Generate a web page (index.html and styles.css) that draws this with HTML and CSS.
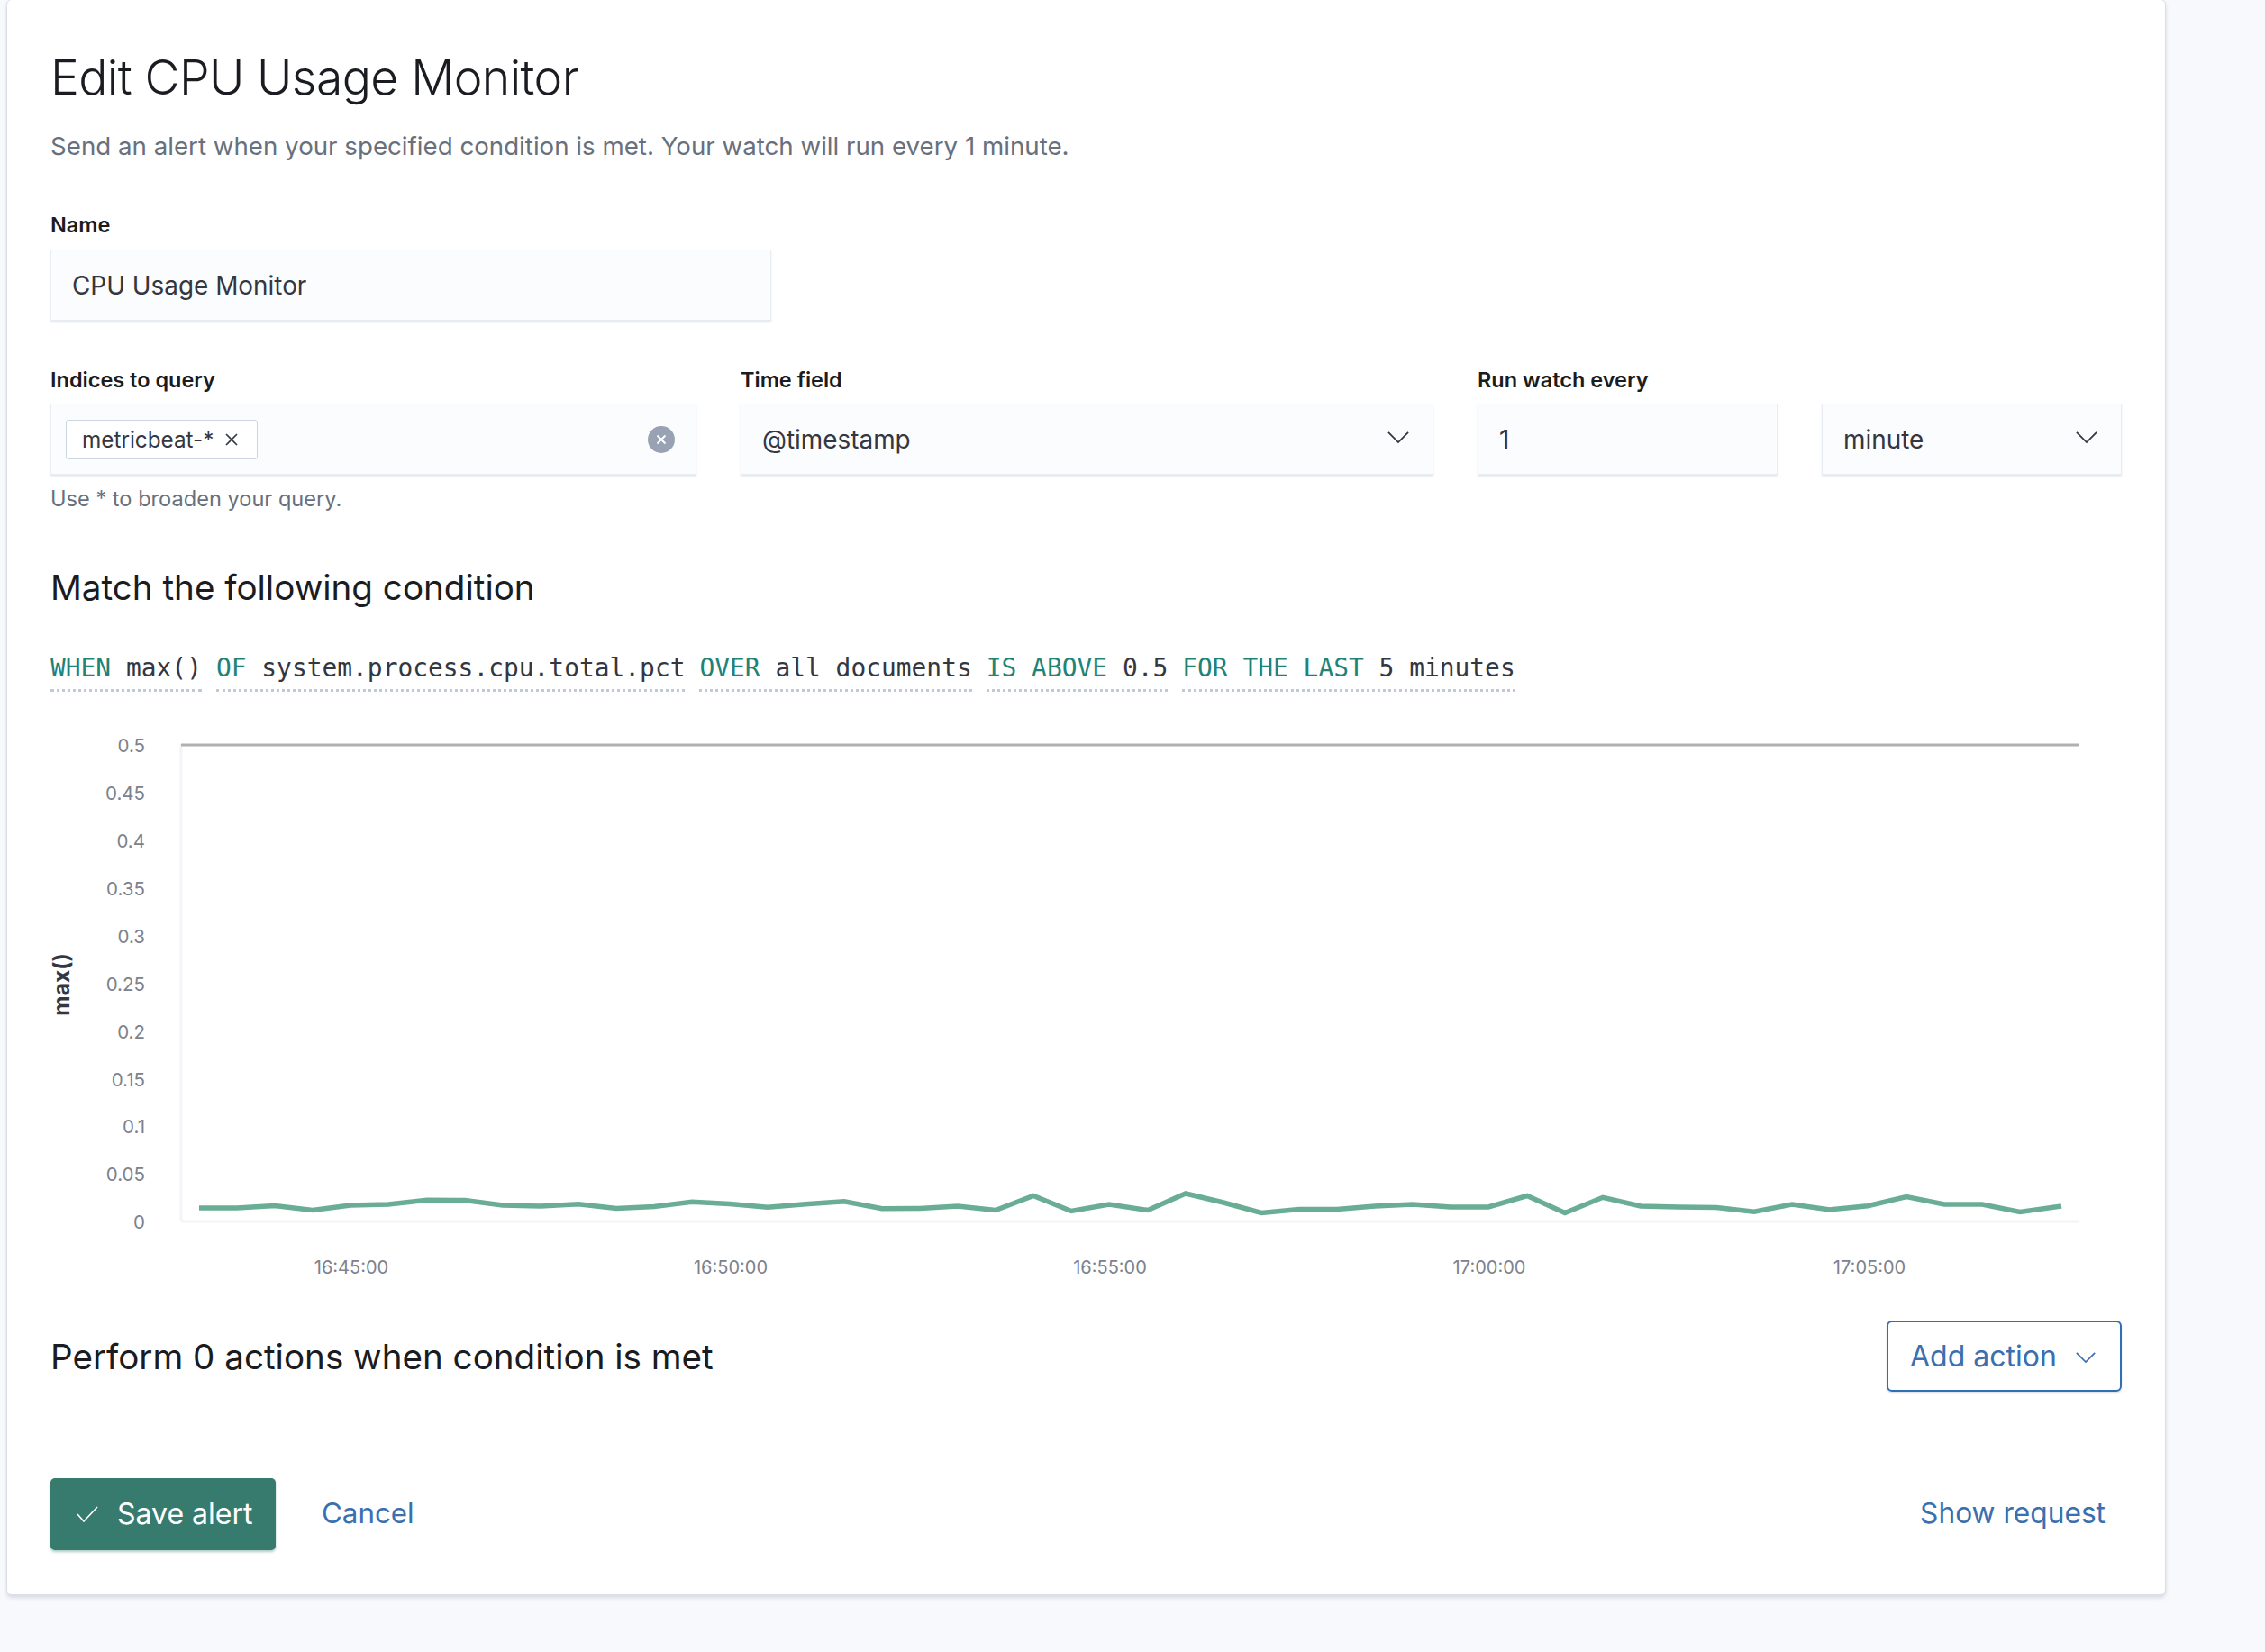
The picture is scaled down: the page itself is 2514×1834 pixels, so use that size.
FILE: index.html
```html
<!DOCTYPE html>
<html lang="en">
<head>
    <meta charset="UTF-8">
    <meta name="viewport" content="width=device-width, initial-scale=1.0">
    <title>Edit CPU Usage Monitor</title>
    <link rel="stylesheet" href="styles.css">
</head>
<body>
    <div class="panel">
        <h1>Edit CPU Usage Monitor</h1>
        <p class="intro">Send an alert when your specified condition is met. Your watch will run every 1 minute.</p>

        <div class="field name-field">
            <label>Name</label>
            <div class="control">CPU Usage Monitor</div>
        </div>

        <div class="field-row">
            <div class="field">
                <label>Indices to query</label>
                <div class="control combo">
                    <span class="pill">metricbeat-*
                        <svg class="pill-x" viewBox="0 0 16 16"><path d="M2 2L14 14M14 2L2 14"/></svg>
                    </span>
                    <svg class="clear-icon" viewBox="0 0 30 30"><circle cx="15" cy="15" r="15"/><path d="M10.5 10.5L19.5 19.5M19.5 10.5L10.5 19.5"/></svg>
                </div>
                <p class="help">Use * to broaden your query.</p>
            </div>
            <div class="field">
                <label>Time field</label>
                <div class="control select">@timestamp
                    <svg class="chevron" viewBox="0 0 26 16"><path d="M1 2L13 14L25 2"/></svg>
                </div>
            </div>
            <div class="field">
                <label>Run watch every</label>
                <div class="control">1</div>
            </div>
            <div class="field">
                <label class="blank">&nbsp;</label>
                <div class="control select">minute
                    <svg class="chevron" viewBox="0 0 26 16"><path d="M1 2L13 14L25 2"/></svg>
                </div>
            </div>
        </div>

        <h2 class="condition-title">Match the following condition</h2>
        <div class="condition">
            <span class="expr"><b>WHEN</b> max()</span>
            <span class="expr"><b>OF</b> system.process.cpu.total.pct</span>
            <span class="expr"><b>OVER</b> all documents</span>
            <span class="expr"><b>IS ABOVE</b> 0.5</span>
            <span class="expr"><b>FOR THE LAST</b> 5 minutes</span>
        </div>

        <svg class="chart" viewBox="55 800 2299 640">
            <line class="axis" x1="200" y1="827" x2="200" y2="1357"/>
            <line class="axis" x1="200" y1="1357" x2="2306" y2="1357"/>
            <line class="threshold" x1="200" y1="828" x2="2306" y2="828"/>

            <g class="ticks">
                <text x="160" y="836">0.5</text>
                <text x="160" y="889">0.45</text>
                <text x="160" y="942">0.4</text>
                <text x="160" y="995">0.35</text>
                <text x="160" y="1048">0.3</text>
                <text x="160" y="1101">0.25</text>
                <text x="160" y="1154">0.2</text>
                <text x="160" y="1207">0.15</text>
                <text x="160" y="1259">0.1</text>
                <text x="160" y="1312">0.05</text>
                <text x="160" y="1365">0</text>
            </g>
            <g class="ticks time">
                <text x="389" y="1415">16:45:00</text>
                <text x="810" y="1415">16:50:00</text>
                <text x="1231" y="1415">16:55:00</text>
                <text x="1652" y="1415">17:00:00</text>
                <text x="2074" y="1415">17:05:00</text>
            </g>
            <text class="axis-title" transform="translate(76 1094) rotate(-90)">max()</text>

            <polyline class="series" points="220,1342 262,1342 304,1339.5 346,1344.5 388,1339 430,1338 473,1333.3 515,1333.5 557,1339 599,1340 641,1337.8 683,1342.5 725,1340.5 767,1335.2 809,1337.5 851,1341.3 893,1337.8 936,1334.8 978,1342.8 1020,1342.5 1062,1340 1104,1344.5 1146,1328.5 1188,1345.5 1230,1338 1273,1344.5 1315,1326 1357,1336 1399,1347.5 1441,1343.5 1483,1343.5 1525,1340 1567,1338 1609,1340.9 1651,1340.9 1694,1328.5 1736,1347.5 1778,1330.3 1820,1340 1862,1340.9 1904,1341.5 1946,1346.2 1988,1338 2030,1343.9 2072,1339.7 2115,1329.5 2157,1338 2199,1338 2241,1346.5 2287,1340"/>
        </svg>

        <div class="actions-head">
            <h2>Perform 0 actions when condition is met</h2>
            <button class="add-action">Add action
                <svg class="chevron small" viewBox="0 0 26 16"><path d="M1 2L13 14L25 2"/></svg>
            </button>
        </div>

        <div class="footer">
            <button class="save">
                <svg class="check" viewBox="0 0 24 18"><path d="M1 9L8 17L23 1"/></svg>
                Save alert
            </button>
            <a class="link cancel" href="#">Cancel</a>
            <a class="link show-request" href="#">Show request</a>
        </div>
    </div>
</body>
</html>
```

FILE: styles.css
```css
* {
    box-sizing: border-box;
}
body {
    font-family: Inter, "Liberation Sans", sans-serif;
    background-color: #f8f9fc;
    color: #343741;
    margin: 0;
    height: 1834px;
    overflow: hidden;
}
.panel {
    width: 2397px;
    height: 1772px;
    margin: -1px 0 0 7px;
    padding: 58px 48px 0 48px;
    background-color: #fff;
    border: 1px solid #d9dfea;
    border-radius: 6px;
    box-shadow: 0 3px 4px rgba(152, 162, 179, 0.35);
}
h1 {
    margin: 0;
    font-size: 53.5px;
    line-height: 56px;
    font-weight: 300;
    letter-spacing: -0.6px;
    color: #1a1c21;
}
h2 {
    margin: 0;
    font-size: 38.6px;
    line-height: 50px;
    font-weight: 400;
    color: #1a1c21;
}
.intro {
    margin: 28px 0 0;
    font-size: 27.7px;
    line-height: 40px;
    color: #69707d;
}
label {
    display: block;
    font-size: 23.5px;
    line-height: 30px;
    font-weight: 600;
    color: #1a1c21;
}
.name-field {
    width: 800px;
    margin-top: 53px;
}
.control {
    position: relative;
    display: flex;
    align-items: center;
    height: 79px;
    margin-top: 12px;
    padding-left: 23px;
    font-size: 27.9px;
    background-color: #fbfcfd;
    border: 1px solid #e9ecf3;
    box-shadow: 0 2px 2px rgba(152, 162, 179, 0.25);
}
.field-row {
    display: grid;
    grid-template-columns: 717px 769px 333px 333px;
    gap: 49px;
    margin-top: 51px;
}
.field-row .control {
    margin-top: 11px;
}
.combo {
    padding-left: 16px;
}
.pill {
    display: flex;
    align-items: center;
    gap: 12px;
    height: 44px;
    padding: 0 20px 0 17px;
    font-size: 24.3px;
    background-color: #fff;
    border: 1px solid #cdd5e2;
    border-radius: 3px;
}
.pill-x {
    width: 16px;
    height: 16px;
    fill: none;
    stroke: #343741;
    stroke-width: 1.6;
}
.clear-icon {
    position: absolute;
    right: 23px;
    top: 24px;
    width: 30px;
    height: 30px;
    fill: #98a2b3;
    stroke: #fff;
    stroke-width: 2;
}
.clear-icon circle {
    stroke: none;
}
.chevron {
    position: absolute;
    right: 26px;
    top: 29px;
    width: 24px;
    height: 15px;
    fill: none;
    stroke: #343741;
    stroke-width: 2;
}
.help {
    margin: 12px 0 0;
    font-size: 23.6px;
    line-height: 30px;
    color: #69707d;
}
.condition-title {
    margin-top: 58px;
}
.condition {
    display: flex;
    gap: 16px;
    margin-top: 45px;
    font-family: "DejaVu Sans Mono", monospace;
    font-size: 27.9px;
    line-height: 40px;
    white-space: pre;
}
.expr {
    border-bottom: 3px dotted #c2c9d6;
    padding-bottom: 3px;
}
.expr b {
    font-weight: 400;
    color: #1f8378;
}
.chart {
    display: block;
    width: 2299px;
    height: 640px;
    margin-top: 31px;
    overflow: visible;
}
.axis {
    stroke: #f2f4f8;
    stroke-width: 3;
}
.threshold {
    stroke: #b0b0b0;
    stroke-width: 3;
}
.ticks text {
    font-size: 20.5px;
    fill: #7d828c;
    text-anchor: end;
}
.ticks.time text {
    font-size: 20px;
    text-anchor: middle;
}
.axis-title {
    font-size: 24.5px;
    font-weight: 700;
    fill: #343741;
    text-anchor: middle;
}
.series {
    fill: none;
    stroke: #69ad94;
    stroke-width: 5.5;
}
.actions-head {
    display: flex;
    justify-content: space-between;
    align-items: center;
    margin-top: 27px;
}
button {
    font-family: inherit;
    font-size: 32px;
    cursor: pointer;
}
.add-action {
    position: relative;
    width: 261px;
    height: 79px;
    padding: 0 0 0 24px;
    text-align: left;
    color: #3a6fb0;
    background-color: #fff;
    border: 2px solid #2f6fb3;
    border-radius: 6px;
    box-shadow: 0 2px 2px rgba(152, 162, 179, 0.3);
}
.chevron.small {
    right: 27px;
    top: 32px;
    width: 22px;
    height: 14px;
    stroke: #3a6fb0;
}
.footer {
    display: flex;
    align-items: center;
    margin-top: 96px;
}
.save {
    display: flex;
    align-items: center;
    gap: 21px;
    width: 250px;
    height: 80px;
    padding: 0 0 2px 29px;
    color: #fff;
    background-color: #367b6e;
    border: none;
    border-radius: 5px;
    box-shadow: 0 2px 3px rgba(54, 123, 110, 0.4);
}
.check {
    width: 24px;
    height: 18px;
    margin-top: 2px;
    fill: none;
    stroke: #fff;
    stroke-width: 1.6;
}
.link {
    font-size: 31.7px;
    padding-bottom: 3px;
    color: #3a6fb0;
    text-decoration: none;
}
.cancel {
    margin-left: 51px;
    font-size: 31.3px;
}
.show-request {
    margin-left: auto;
    margin-right: 18px;
}
```
